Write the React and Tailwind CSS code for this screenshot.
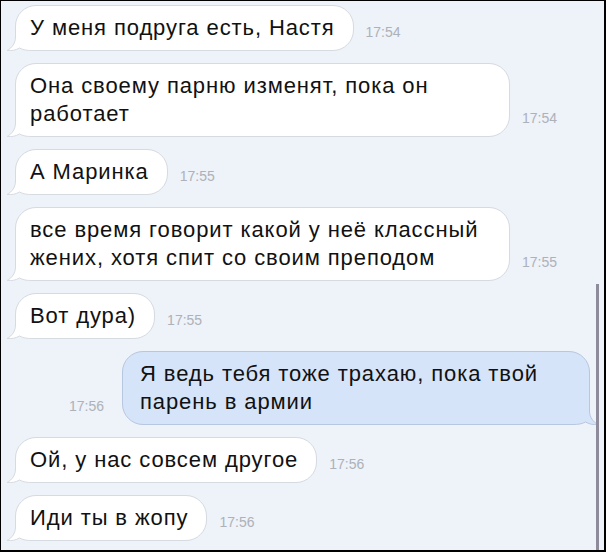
import clsx from 'clsx';

const messages = [
    { id: 1, lines: ['У меня подруга есть, Настя'], time: '17:54' },
    { id: 2, lines: ['Она своему парню изменят, пока он', 'работает'], time: '17:54', wide: true },
    { id: 3, lines: ['А Маринка'], time: '17:55' },
    { id: 4, lines: ['все время говорит какой у неё классный', 'жених, хотя спит со своим преподом'], time: '17:55', wide: true },
    { id: 5, lines: ['Вот дура)'], time: '17:55' },
    { id: 6, lines: ['Я ведь тебя тоже трахаю, пока твой', 'парень в армии'], time: '17:56', mine: true },
    { id: 7, lines: ['Ой, у нас совсем другое'], time: '17:56' },
    { id: 8, lines: ['Иди ты в жопу'], time: '17:56' },
];

const TAIL = 'M9.5 0 L9.5 8 C9.5 14 6 19 1 21.5 C6 22 10 21 13.5 19 C17 21 21 21.5 26 21.5 L34 21.5';

const Tail = ({ mine }) => (
    <svg
        viewBox="0 0 34 22"
        className={clsx(
            'absolute bottom-[-1px] w-[34px] h-[22px]',
            mine ? 'right-[-10px] -scale-x-100' : 'left-[-10px]'
        )}
    >
        <path d={TAIL + ' L34 0 Z'} fill={mine ? '#d6e4fa' : '#ffffff'} />
        <path d={TAIL} fill="none" stroke={mine ? '#b7c7df' : '#d6dae1'} strokeWidth="1" />
    </svg>
);

const Time = ({ children }) => (
    <span className="pb-[11px] text-[14px] leading-4 text-[#adb1b8] whitespace-nowrap">{children}</span>
);

const Bubble = ({ m }) => (
    <div
        className={clsx(
            'relative border rounded-[21px] py-2 text-[22px] leading-[28px] tracking-[0.9px] text-[#111] whitespace-nowrap',
            m.mine ? 'bg-[#d6e4fa] border-[#b7c7df] w-[468px] pl-[17px]' : 'bg-white border-[#d6dae1] pl-[14px] pr-[18px]',
            m.wide && 'w-[495px]'
        )}
    >
        <Tail mine={m.mine} />
        <div className="relative">
            {m.lines.map((l, i) => (
                <div key={i}>{l}</div>
            ))}
        </div>
    </div>
);

export default function App() {
    return (
        <div className="relative w-[606px] h-[552px] overflow-hidden bg-[#eef2f9] border-t border-l border-r-2 border-b-2 border-black font-['Liberation_Sans',Arial,sans-serif]">
            <div className="flex flex-col gap-3 pt-1 pl-[14px] pr-[14px]">
                {messages.map(m =>
                    m.mine ? (
                        <div key={m.id} className="flex items-end justify-end gap-[18px]">
                            <Time>{m.time}</Time>
                            <Bubble m={m} />
                        </div>
                    ) : (
                        <div key={m.id} className="flex items-end gap-[12px]">
                            <Bubble m={m} />
                            <Time>{m.time}</Time>
                        </div>
                    )
                )}
            </div>
            <div className="absolute right-[5px] top-[283px] bottom-0 w-[3px] bg-[#8e8c9a]" />
        </div>
    );
}
